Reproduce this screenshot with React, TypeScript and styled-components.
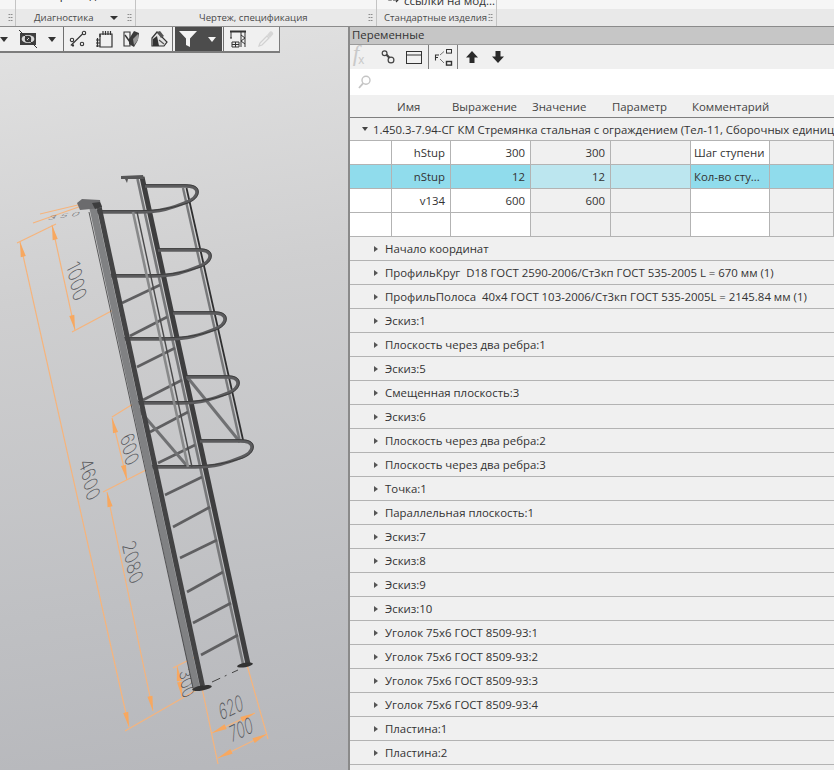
import * as React from "react";
import styled, { createGlobalStyle } from "styled-components";

const GlobalStyle = createGlobalStyle`
    html, body, #root {
        margin: 0;
        padding: 0;
        width: 834px;
        height: 770px;
        overflow: hidden;
    }
    body {
        font-family: "Open Sans", "Noto Sans", sans-serif;
        color: #3a3a3a;
    }
`;

const Page = styled.div`
    width: 834px;
    height: 770px;
    display: flex;
    flex-direction: column;
    overflow: hidden;
    background: #f0f0f0;
`;

const Ribbon = styled.div`
    height: 26px;
    flex: none;
    display: flex;
    background: linear-gradient(#f6f6f6 0, #f6f6f6 9px, #e9e9e9 9px, #e9e9e9 100%);
    border-bottom: 1px solid #8b8b8b;
    box-sizing: content-box;
`;

const RibbonGroup = styled.div<{ $w?: number }>`
    width: ${(p) => (p.$w ? `${p.$w}px` : "auto")};
    flex: ${(p) => (p.$w ? "none" : "1")};
    box-sizing: border-box;
    border-right: ${(p) => (p.$w ? "1px solid #c4c4c4" : "none")};
    display: flex;
    flex-direction: column;
    height: 26px;
`;

const RibbonTop = styled.div`
    height: 9px;
    overflow: hidden;
    font-size: 11.6px;
    line-height: 9px;
    white-space: nowrap;
`;

const TopText = styled.div<{ $left: number; $rise: number; $gap: number }>`
    margin-left: ${(p) => p.$left}px;
    margin-top: ${(p) => -p.$rise}px;
    display: flex;
    align-items: flex-end;
    gap: ${(p) => p.$gap}px;
    color: #333;
`;

const RibbonLabel = styled.div<{ $pad: number }>`
    height: 17px;
    display: flex;
    align-items: center;
    font-size: 9.6px;
    color: #4a4a4a;
    padding-left: ${(p) => p.$pad}px;
    padding-right: 3px;
    white-space: nowrap;
`;

const Spacer = styled.div`
    flex: 1;
`;

const Grip = styled.span`
    width: 5px;
    height: 9px;
    flex: none;
    background-image: radial-gradient(circle, #777 0.7px, transparent 0.9px);
    background-size: 2.5px 3px;
`;

const RibbonCaret = styled.span`
    width: 0;
    height: 0;
    flex: none;
    margin-right: 9px;
    border-left: 4px solid transparent;
    border-right: 4px solid transparent;
    border-top: 4px solid #333;
`;

const Main = styled.div`
    flex: 1;
    display: flex;
    min-height: 0;
`;

const Viewport = styled.div`
    width: 348px;
    flex: none;
    position: relative;
    background: linear-gradient(172deg, #e2e2e2 0%, #cfcfd0 35%, #bfc0c3 75%, #b6b7bb 100%);
    overflow: hidden;
`;

const Scene = styled.svg`
    display: block;
    width: 348px;
    height: 743px;
`;

const FloatBar = styled.div`
    position: absolute;
    left: 0;
    top: 0;
    width: 280px;
    height: 26px;
    box-sizing: border-box;
    background: #f0f0f0;
    border-right: 1px solid #7c7c7c;
    border-bottom: 2px solid #7c7c7c;
    display: flex;
    align-items: center;
`;

const Slot = styled.div<{ $w: number }>`
    width: ${(p) => p.$w}px;
    height: 100%;
    flex: none;
    display: flex;
    align-items: center;
    justify-content: center;
`;

const BarSep = styled.div`
    width: 1px;
    height: 100%;
    flex: none;
    background: #6f6f6f;
`;

const FilterBox = styled.div`
    width: 47px;
    height: 100%;
    margin-left: 2px;
    margin-right: 1px;
    flex: none;
    display: flex;
    align-items: center;
    background: #4c4c4c;
`;

const Caret = styled.span<{ $light?: boolean }>`
    width: 0;
    height: 0;
    border-left: 4.5px solid transparent;
    border-right: 4.5px solid transparent;
    border-top: 5px solid ${(p) => (p.$light ? "#f4f4f4" : "#333")};
`;

const Panel = styled.div`
    flex: 1;
    min-width: 0;
    border-left: 2px solid #8a8a8a;
    display: flex;
    flex-direction: column;
    background: #f0f0f0;
    font-size: 11.4px;
`;

const PanelTitle = styled.div`
    height: 17px;
    flex: none;
    background: #c6c6c6;
    border-bottom: 1px solid #9a9a9a;
    font-size: 11.4px;
    line-height: 16px;
    padding-left: 2px;
    color: #333;
`;

const PanelBar = styled.div`
    height: 24px;
    flex: none;
    display: flex;
    align-items: center;
    background: #f0f0f0;
`;

const PanelSep = styled.div`
    width: 1px;
    height: 24px;
    flex: none;
    background: #7d7d7d;
`;

const Fx = styled.span`
    font-family: "Liberation Serif", serif;
    font-style: italic;
    font-size: 23px;
    line-height: 20px;
    color: #c9c9c9;
    letter-spacing: -1px;
`;

const FxSub = styled.span`
    font-family: "Liberation Sans", sans-serif;
    font-style: normal;
    font-size: 12px;
    vertical-align: -3px;
`;

const SearchRow = styled.div`
    height: 26px;
    flex: none;
    display: flex;
    align-items: center;
    background: #fff;
    padding-left: 8px;
`;

const HeaderRow = styled.div`
    height: 23px;
    flex: none;
    box-sizing: border-box;
    display: grid;
    grid-template-columns: 47px 55px 80px 80px 80px 1fr;
    align-items: center;
    background: #f0f0f0;
    border-bottom: 1px solid #7f7f7f;
    color: #444;
`;

const HeaderCell = styled.div`
    white-space: nowrap;
`;

const GroupRow = styled.div`
    height: 23px;
    flex: none;
    box-sizing: border-box;
    display: flex;
    align-items: center;
    padding-left: 12px;
    white-space: pre;
    overflow: hidden;
    border-bottom: 1px solid #b3b3b3;
    color: #333;
`;

const TreeArrow = styled.span<{ $open?: boolean }>`
    width: 0;
    height: 0;
    flex: none;
    margin-right: ${(p) => (p.$open ? 5 : 7)}px;
    border-style: solid;
    border-color: transparent;
    ${(p) =>
        p.$open
            ? `border-width: 4.5px 3px 0 3px; border-top-color: #444;`
            : `border-width: 3px 0 3px 4.5px; border-left-color: #555;`}
`;

const VarRow = styled.div`
    height: 24px;
    flex: none;
    display: grid;
    grid-template-columns: 42px 59px 80px 80px 80px 79px 1fr;
    box-sizing: border-box;
    border-bottom: 1px solid #b3b3b3;
`;

const Cell = styled.div<{ $tone: "white" | "grey"; $sel?: boolean; $align?: "left" | "right" }>`
    box-sizing: border-box;
    border-right: 1px solid #b3b3b3;
    display: flex;
    align-items: center;
    justify-content: ${(p) => (p.$align === "left" ? "flex-start" : "flex-end")};
    padding: 0 5px 0 3px;
    white-space: nowrap;
    overflow: hidden;
    color: #333;
    background: ${(p) =>
        p.$sel
            ? p.$tone === "white"
                ? "#90dcec"
                : "#bce6ef"
            : p.$tone === "white"
              ? "#fff"
              : "#f0f0f0"};
`;

const TreeRow = styled.div`
    height: 24px;
    flex: none;
    box-sizing: border-box;
    display: flex;
    align-items: center;
    padding-left: 24px;
    white-space: pre;
    overflow: hidden;
    border-bottom: 1px solid #b3b3b3;
    color: #333;
`;

const DimLabel = styled.text`
    font-family: "Inter", "Liberation Sans", sans-serif;
    font-weight: 200;
    fill: #55565a;
    text-anchor: middle;
    dominant-baseline: central;
`;

const variables = [
    { name: "hStup", expr: "300", value: "300", note: "Шаг ступени", sel: false },
    { name: "nStup", expr: "12", value: "12", note: "Кол-во сту...", sel: true },
    { name: "v134", expr: "600", value: "600", note: "", sel: false },
    { name: "", expr: "", value: "", note: "", sel: false },
];

const treeItems = [
    "Начало координат",
    "ПрофильКруг  D18 ГОСТ 2590-2006/Ст3кп ГОСТ 535-2005 L = 670 мм (1)",
    "ПрофильПолоса  40х4 ГОСТ 103-2006/Ст3кп ГОСТ 535-2005L = 2145.84 мм (1)",
    "Эскиз:1",
    "Плоскость через два ребра:1",
    "Эскиз:5",
    "Смещенная плоскость:3",
    "Эскиз:6",
    "Плоскость через два ребра:2",
    "Плоскость через два ребра:3",
    "Точка:1",
    "Параллельная плоскость:1",
    "Эскиз:7",
    "Эскиз:8",
    "Эскиз:9",
    "Эскиз:10",
    "Уголок 75х6 ГОСТ 8509-93:1",
    "Уголок 75х6 ГОСТ 8509-93:2",
    "Уголок 75х6 ГОСТ 8509-93:3",
    "Уголок 75х6 ГОСТ 8509-93:4",
    "Пластина:1",
    "Пластина:2",
];

// viewport svg starts 27px below the page top, so the drawing is shifted by that
const rungs = [
    [122, 303, 160, 285],
    [130, 336, 167, 317],
    [137, 367, 175, 348],
    [143, 400, 182, 380],
    [150, 432, 188, 412],
    [158, 463, 195, 445],
    [165, 495, 202, 477],
    [173, 527, 210, 507],
    [180, 558, 217, 540],
    [187, 592, 223, 572],
    [193, 623, 231, 603],
    [201, 655, 238, 635],
];

const hoops = [
    [92, 212],
    [105, 276],
    [120, 339],
    [133, 403],
    [147, 467],
];

const ORANGE = "#f6b47c";

const Dim: React.FC<{ a: number[]; b: number[] }> = ({ a, b }) => {
    const dx = b[0] - a[0];
    const dy = b[1] - a[1];
    const len = Math.hypot(dx, dy);
    const ux = dx / len;
    const uy = dy / len;
    const head = (px: number, py: number, dir: number) => {
        const bx = px + ux * dir * 15;
        const by = py + uy * dir * 15;
        return `${px},${py} ${bx - uy * 2.6},${by + ux * 2.6} ${bx + uy * 2.6},${by - ux * 2.6}`;
    };
    return (
        <g>
            <line x1={a[0]} y1={a[1]} x2={b[0]} y2={b[1]} stroke={ORANGE} strokeWidth={1.2} />
            <polygon points={head(a[0], a[1], 1)} fill="#f7a860" />
            <polygon points={head(b[0], b[1], -1)} fill="#f7a860" />
        </g>
    );
};

const Ext: React.FC<{ p: number[] }> = ({ p }) => (
    <line x1={p[0]} y1={p[1]} x2={p[2]} y2={p[3]} stroke={ORANGE} strokeWidth={1.2} />
);

// dimension text lies in the model's plane: baseline along the dim line, digit tops along the extension line
const DimText: React.FC<{
    x: number;
    y: number;
    base: number;
    up: number;
    sx?: number;
    size?: number;
    children: string;
}> = ({ x, y, base, up, sx = 0.85, size = 20, children }) => {
    const b = (base * Math.PI) / 180;
    const u = (up * Math.PI) / 180;
    const matrix = [sx * Math.cos(b), sx * Math.sin(b), -Math.cos(u), -Math.sin(u), x, y];
    return (
        <DimLabel transform={`matrix(${matrix.join(" ")})`} fontSize={size}>
            {children}
        </DimLabel>
    );
};

const Ladder: React.FC = () => (
    <Scene viewBox="0 27 348 743">
        {/* dimensions */}
        <Ext p={[33, 223, 93, 202]} />
        <Ext p={[17, 243, 56, 224]} />
        <Ext p={[40, 214, 82, 204]} />
        <Ext p={[72, 332, 117, 308]} />
        <Ext p={[112, 417, 133, 404]} />
        <Ext p={[103, 492, 148, 469]} />
        <Ext p={[125, 731, 200, 688]} />
        <Ext p={[173, 668, 195, 657]} />
        <Ext p={[202, 688, 218, 764]} />
        <Ext p={[247, 665, 268, 739]} />
        <Dim a={[20, 242]} b={[129, 727]} />
        <Dim a={[52, 225]} b={[75, 330]} />
        <Dim a={[112, 418]} b={[127, 480]} />
        <Dim a={[107, 492]} b={[153, 711]} />
        <Dim a={[177, 666]} b={[182, 697]} />
        <Dim a={[212, 733]} b={[255, 713]} />
        <Dim a={[218, 758]} b={[267, 734]} />
        <DimText x={77} y={281} base={78} up={-28}>1000</DimText>
        <DimText x={90} y={479} base={78} up={-28}>4600</DimText>
        <DimText x={130} y={449} base={78} up={-28}>600</DimText>
        <DimText x={133} y={562} base={78} up={-28}>2080</DimText>
        <DimText x={187} y={683} base={82} up={-27} size={18}>300</DimText>
        <DimText x={231} y={707} base={-25} up={-102} sx={0.65} size={22}>620</DimText>
        <DimText x={241} y={729} base={-25} up={-102} sx={0.65} size={22}>700</DimText>
        <DimLabel transform="translate(64 216) rotate(-8) skewX(-45) scale(1.5 0.55)" fontSize={9}>
            3 5 0
        </DimLabel>

        {/* back rail and strips */}
        <line x1={137.5} y1={179} x2={243} y2={664} stroke="#77787a" strokeWidth={2.6} />
        <line x1={142} y1={177} x2={248} y2={664} stroke="#3e3e3f" strokeWidth={5} />
        <line x1={183} y1={188} x2={240} y2={442} stroke="#77787a" strokeWidth={2.4} />
        <line x1={186.5} y1={188} x2={243.5} y2={442} stroke="#2f2f30" strokeWidth={1.8} />

        {rungs.map((r) => (
            <line key={r[1]} x1={r[0]} y1={r[1]} x2={r[2]} y2={r[3]} stroke="#5f5f61" strokeWidth={2.6} />
        ))}

        {/* braces */}
        <line x1={133} y1={403} x2={188} y2={467} stroke="#707173" strokeWidth={3} />
        <line x1={188} y1={378} x2={240} y2={442} stroke="#707173" strokeWidth={3} />

        {/* hoops */}
        {hoops.map((h) => (
            <g key={h[1]} transform={`translate(${h[0] - 92} ${h[1] - 212})`}>
                <path
                    d="M145 186 H185 C193 186 197 188 197 192 C197 197 192 200 187 202 C172 208 160 212 140 212 H92"
                    fill="none"
                    stroke="#5c5c5e"
                    strokeWidth={3.4}
                />
                <path
                    d="M145 184.6 H185 C194 184.6 198.4 187 198.4 192 C198.4 197 193 201 188 203 C172 208 160 210.6 140 210.6 H92"
                    fill="none"
                    stroke="#333334"
                    strokeWidth={0.8}
                />
            </g>
        ))}

        {/* front strip */}
        <line x1={133} y1={212} x2={188} y2={467} stroke="#88898a" strokeWidth={2.6} />
        <line x1={137} y1={212} x2={192} y2={467} stroke="#4a4a4b" strokeWidth={1.4} />

        {/* front rail */}
        <line x1={92.5} y1={206} x2={196.5} y2={688} stroke="#808183" strokeWidth={7} />
        <line x1={98.5} y1={204} x2={202.5} y2={686} stroke="#434344" strokeWidth={5} />
        <line x1={89} y1={212} x2={193} y2={688} stroke="#3a3a3b" strokeWidth={0.8} />

        {/* plates and feet */}
        <polygon points="77,203 80,210 101,208 100,200 82,199" fill="#6b6b6d" />
        <polygon points="92,203 100,202 102,207 95,209" fill="#3d3d3e" />
        <polygon points="121,176 143,175 144,179 128,179 127,183 125,179 121,179" fill="#565657" />
        <ellipse cx={202} cy={688} rx={10} ry={2.6} transform="rotate(-10 202 688)" fill="#333" />
        <ellipse cx={245} cy={665} rx={8} ry={2.2} transform="rotate(-10 245 665)" fill="#333" />
        <line x1={212} y1={682} x2={238} y2={670} stroke="#444" strokeWidth={1} strokeDasharray="9 5 2 6" />
    </Scene>
);

const EyeIcon = () => (
    <svg width="18" height="18" viewBox="0 0 18 18">
        <path d="M1 3 L6 3 L17 3 L17 15 L1 15 Z" fill="#3f3f3f" />
        <ellipse cx="9" cy="9" rx="6.4" ry="4" fill="#d9d9d9" />
        <circle cx="9" cy="9" r="3.2" fill="#333" />
        <circle cx="9" cy="9" r="1.2" fill="#ddd" />
        <path d="M0 0 L18 18" stroke="#333" strokeWidth="1" />
    </svg>
);

const NodesIcon = () => (
    <svg width="18" height="18" viewBox="0 0 18 18" fill="none" stroke="#333" strokeWidth="1.1">
        <circle cx="3" cy="10" r="1.7" />
        <circle cx="15" cy="3" r="1.7" />
        <circle cx="13" cy="14" r="1.7" />
        <circle cx="4" cy="15.5" r="0.6" />
        <path d="M1.8 15.5 L13.5 4" />
    </svg>
);

const BookIcon = () => (
    <svg width="18" height="18" viewBox="0 0 18 18" fill="none" stroke="#333" strokeWidth="1.2">
        <path d="M5 4 H17 V17 H5 Z" />
        <path d="M5 7 V4 M8 1 V5 M10.5 1 V5 M13 1 V5 M15.5 1 V5" />
        <path d="M1 10 H5 M1 13 H5 M1 16 H5 M2.5 8 V17" />
    </svg>
);

const CubeIcon = () => (
    <svg width="18" height="18" viewBox="0 0 18 18">
        <path d="M1 2 H7 V16 H1 Z" fill="none" stroke="#333" strokeWidth="1.1" />
        <path d="M6 9 L11 1 L16 3 L15 10 L11 17 L6 14 Z" fill="#3b3b3b" />
        <path d="M10 9 L15 4 L15 10 L11 15 Z" fill="#9a9a9a" />
        <path d="M2 5 L7 12" stroke="#333" strokeWidth="1.4" />
    </svg>
);

const SheetIcon = () => (
    <svg width="18" height="18" viewBox="0 0 18 18">
        <path d="M1 16 V8 L6 2 L16 12 L13 16 Z" fill="#e4e4e4" stroke="#333" strokeWidth="1.2" />
        <path d="M2 16 V9 L6 6 L8 16 Z" fill="#333" />
        <path d="M6 2 L9 1 L13 6 L10 8 Z" fill="#555" />
        <path d="M8 10 L13 14" stroke="#555" strokeWidth="1.2" />
    </svg>
);

const FilterIcon = () => (
    <svg width="20" height="18" viewBox="0 0 20 18">
        <path d="M1 1 H19 L12 8.5 V17 L8 15 V8.5 Z" fill="#f5f5f5" />
    </svg>
);

const CraneIcon = () => (
    <svg width="18" height="18" viewBox="0 0 18 18" fill="none" stroke="#333" strokeWidth="1">
        <path d="M1 1.5 H17" strokeWidth="2" />
        <path d="M2 2 V8" />
        <path d="M1 8 H3" />
        <path d="M12 2 V17 M16 2 V17 M12 5 L16 8 M16 8 L12 11 M12 11 L16 14" />
        <path d="M3 12 H10 V17 H3 Z M3 14.5 H10 M6.5 12 V17" />
    </svg>
);

const PipetteIcon = () => (
    <svg width="18" height="18" viewBox="0 0 18 18">
        <path d="M2 16 L3 13 L10 6 L12 8 L5 15 Z" fill="none" stroke="#d2d2d2" strokeWidth="1.3" />
        <path d="M10 5 L13 1.5 C14.5 0.5 17 3 16 4.5 L13 8 Z" fill="#d6d6d6" />
    </svg>
);

const LinkIcon = () => (
    <svg width="14" height="14" viewBox="0 0 14 14" fill="none" stroke="#444" strokeWidth="1.2">
        <circle cx="3.6" cy="3.2" r="2.4" />
        <path d="M5.4 4.6 L8.6 8" strokeWidth="2.2" />
        <circle cx="10" cy="10" r="2.9" />
    </svg>
);

const WindowIcon = () => (
    <svg width="16" height="13" viewBox="0 0 16 13" fill="none" stroke="#333" strokeWidth="1">
        <rect x="0.5" y="0.5" width="15" height="12" />
        <path d="M0.5 4 H15.5" />
    </svg>
);

const TreeIcon = () => (
    <svg width="19" height="17" viewBox="0 0 19 17" fill="none" stroke="#333" strokeWidth="1">
        <path d="M1.5 11.5 V6 H5 M1.5 8.5 H4" strokeWidth="1.1" />
        <path d="M6 6 L10 2.5 M6 10 L10 14" stroke="#777" />
        <rect x="12.5" y="0.5" width="5" height="3.6" />
        <rect x="12.5" y="12.5" width="5" height="3.6" strokeWidth="1.4" />
    </svg>
);

const ArrowUpIcon = () => (
    <svg width="12" height="12" viewBox="0 0 12 12">
        <path d="M6 0 L12 6.5 H8.5 V12 H3.5 V6.5 H0 Z" fill="#2a2a2a" />
    </svg>
);

const ArrowDownIcon = () => (
    <svg width="12" height="12" viewBox="0 0 12 12">
        <path d="M6 12 L12 5.5 H8.5 V0 H3.5 V5.5 H0 Z" fill="#2a2a2a" />
    </svg>
);

const SearchIcon = () => (
    <svg width="13" height="14" viewBox="0 0 13 14" fill="none" stroke="#c4c4c4" strokeWidth="1.4">
        <circle cx="8" cy="5.2" r="4" />
        <path d="M5 8.4 L1 13" strokeWidth="1.8" />
    </svg>
);

const TopLinkIcon = () => (
    <svg width="14" height="9" viewBox="0 0 14 9" fill="none" stroke="#333" strokeWidth="1.1">
        <circle cx="5" cy="1" r="3" />
        <path d="M8 4 H13 M11 2 L13 4 L11 6" />
    </svg>
);

const TopCutIcon = () => (
    <svg width="16" height="4" viewBox="0 0 16 4" fill="none" stroke="#333" strokeWidth="1.1">
        <path d="M1 0 V2.5 H13 L15 0" />
    </svg>
);

const App: React.FC = () => {
    return (
        <Page>
            <GlobalStyle />
            <Ribbon>
                <RibbonGroup $w={16}>
                    <RibbonTop />
                    <RibbonLabel $pad={8}>
                        <Grip />
                    </RibbonLabel>
                </RibbonGroup>
                <RibbonGroup $w={120}>
                    <RibbonTop>
                        <TopText $left={4} $rise={10} $gap={10}>
                            <TopCutIcon />
                            <span>Сервис д</span>
                        </TopText>
                    </RibbonTop>
                    <RibbonLabel $pad={18}>
                        Диагностика
                        <Spacer />
                        <RibbonCaret />
                        <Grip />
                    </RibbonLabel>
                </RibbonGroup>
                <RibbonGroup $w={241}>
                    <RibbonTop />
                    <RibbonLabel $pad={63}>
                        Чертеж, спецификация
                        <Spacer />
                        <Grip />
                    </RibbonLabel>
                </RibbonGroup>
                <RibbonGroup $w={120}>
                    <RibbonTop>
                        <TopText $left={8} $rise={4} $gap={5}>
                            <TopLinkIcon />
                            <span>ссылки на мод...</span>
                        </TopText>
                    </RibbonTop>
                    <RibbonLabel $pad={7}>
                        Стандартные изделия
                        <Spacer />
                        <Grip />
                    </RibbonLabel>
                </RibbonGroup>
                <RibbonGroup />
            </Ribbon>
            <Main>
                <Viewport>
                    <Ladder />
                    <FloatBar>
                        <Slot $w={8}><Caret /></Slot>
                        <Slot $w={40}><EyeIcon /></Slot>
                        <Slot $w={8}><Caret /></Slot>
                        <Slot $w={7} />
                        <BarSep />
                        <Slot $w={28}><NodesIcon /></Slot>
                        <Slot $w={24}><BookIcon /></Slot>
                        <Slot $w={31}><CubeIcon /></Slot>
                        <Slot $w={25}><SheetIcon /></Slot>
                        <BarSep />
                        <FilterBox>
                            <Slot $w={26}><FilterIcon /></Slot>
                            <Slot $w={21}><Caret $light /></Slot>
                        </FilterBox>
                        <BarSep />
                        <Slot $w={28}><CraneIcon /></Slot>
                        <Slot $w={28}><PipetteIcon /></Slot>
                    </FloatBar>
                </Viewport>
                <Panel>
                    <PanelTitle>Переменные</PanelTitle>
                    <PanelBar>
                        <Slot $w={16}>
                            <Fx>f<FxSub>x</FxSub></Fx>
                        </Slot>
                        <Slot $w={14} />
                        <Slot $w={16}><LinkIcon /></Slot>
                        <Slot $w={10} />
                        <Slot $w={16}><WindowIcon /></Slot>
                        <Slot $w={6} />
                        <PanelSep />
                        <Slot $w={28}><TreeIcon /></Slot>
                        <PanelSep />
                        <Slot $w={28}><ArrowUpIcon /></Slot>
                        <Slot $w={24}><ArrowDownIcon /></Slot>
                    </PanelBar>
                    <SearchRow>
                        <SearchIcon />
                    </SearchRow>
                    <HeaderRow>
                        <HeaderCell />
                        <HeaderCell>Имя</HeaderCell>
                        <HeaderCell>Выражение</HeaderCell>
                        <HeaderCell>Значение</HeaderCell>
                        <HeaderCell>Параметр</HeaderCell>
                        <HeaderCell>Комментарий</HeaderCell>
                    </HeaderRow>
                    <GroupRow>
                        <TreeArrow $open />
                        1.450.3-7.94-СГ КМ Стремянка стальная с ограждением (Тел-11, Сборочных единиц: 1)
                    </GroupRow>
                    {variables.map((v, i) => (
                        <VarRow key={i}>
                            <Cell $tone="white" $sel={v.sel} />
                            <Cell $tone="white" $sel={v.sel}>{v.name}</Cell>
                            <Cell $tone="white" $sel={v.sel}>{v.expr}</Cell>
                            <Cell $tone="grey" $sel={v.sel}>{v.value}</Cell>
                            <Cell $tone="grey" $sel={v.sel} />
                            <Cell $tone="white" $sel={v.sel} $align="left">{v.note}</Cell>
                            <Cell $tone={v.sel ? "white" : "grey"} $sel={v.sel} />
                        </VarRow>
                    ))}
                    {treeItems.map((t) => (
                        <TreeRow key={t}>
                            <TreeArrow />
                            {t}
                        </TreeRow>
                    ))}
                </Panel>
            </Main>
        </Page>
    );
};

export default App;
